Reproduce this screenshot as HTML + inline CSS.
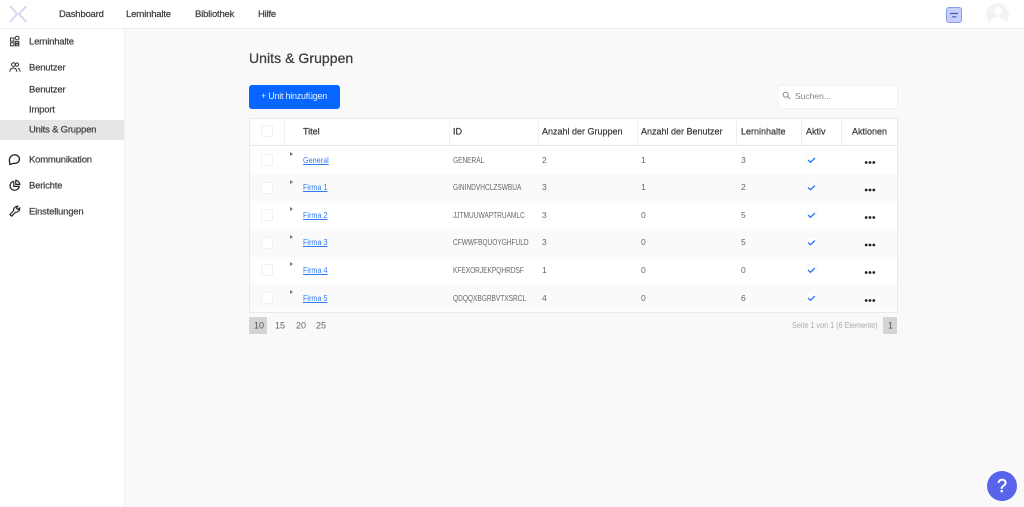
<!DOCTYPE html>
<html lang="de"><head><meta charset="utf-8"><title>Units &amp; Gruppen</title>
<style>
html,body{margin:0;padding:0;background:#f9f9f9}
#w{width:1024px;height:507px;position:relative;overflow:hidden;background:#f9f9f9;font-family:"Liberation Sans",sans-serif;color:#555;font-size:9px;filter:blur(.3px)}
.a,.t{position:absolute;white-space:nowrap}
.t{line-height:14px;height:14px;transform:translateY(-7px)}
.nav{font-size:9.5px;color:#3c3c3c;letter-spacing:-.2px;-webkit-text-stroke:.2px #3c3c3c}
.t.side{font-size:9.5px;color:#3c3c3c;letter-spacing:-.2px;left:29px;-webkit-text-stroke:.2px #3c3c3c;transform:translateY(-6.4px)}
.t.h{font-size:9px;color:#3c3c3c;-webkit-text-stroke:.25px #3c3c3c;transform:translateY(-7.6px)}
.t.p{font-size:9px;transform:translateY(-7.6px)}
.c{font-size:8.5px;color:#666}
.t.id{transform:translateY(-7px) scaleX(.77);transform-origin:left center;left:453px}
.t.l{font-size:8.5px;color:#2f7bf0;text-decoration:underline;left:303px;transform:translateY(-7px) scaleX(.85);transform-origin:left center}
.cb{position:absolute;left:261px;width:10px;height:10px;background:#fff;border:1px solid #f1f1f1;border-radius:2px}
.vl{position:absolute;top:118px;height:28px;width:1px;background:#efefef}
.tri{position:absolute;left:290px;width:0;height:0;border-left:3px solid #777;border-top:2px solid transparent;border-bottom:2px solid transparent}
svg{position:absolute;overflow:visible}
</style></head><body><div id="w">
<div class="a" style="left:0;top:0;width:1024px;height:28px;background:#fff;border-bottom:1px solid #eee"></div>
<div class="a" style="left:0;top:29px;width:124px;height:478px;background:#fff;border-right:1px solid #eee"></div>
<svg style="left:0;top:0" width="30" height="28" fill="none" stroke="#d9d7ee" stroke-width="2"><path d="M10 6L17 14L10 22M26.5 6L19 14L26.5 22"/></svg>
<span class="t nav" style="left:59px;top:14.5px">Dashboard</span>
<span class="t nav" style="left:126px;top:14.5px">Lerninhalte</span>
<span class="t nav" style="left:195px;top:14.5px">Bibliothek</span>
<span class="t nav" style="left:258px;top:14.5px">Hilfe</span>
<div class="a" style="left:946px;top:7px;width:14px;height:14px;background:#c6cffb;border:1px solid #8c9bee;border-radius:3px"></div>
<svg style="left:946px;top:7px" width="16" height="16" fill="none" stroke="#4a5bc0" stroke-width="1.2"><path d="M4 6.5H12M6 9.8H10.5"/></svg>
<div class="a" style="left:986px;top:3px;width:23px;height:23px;border-radius:50%;background:#f3f3f3;overflow:hidden"><div class="a" style="left:7.5px;top:4px;width:8px;height:8px;border-radius:50%;background:#fff"></div><div class="a" style="left:3.5px;top:14px;width:16px;height:12px;border-radius:50%;background:#fff"></div></div>

<svg style="left:10px;top:35px" width="11" height="12" viewBox="0 0 11 12" fill="none" stroke="#333" stroke-width="1"><rect x=".5" y="3" width="3.4" height="3.2"/><rect x=".5" y="7.8" width="3.4" height="3"/><rect x="5.4" y="6.4" width="3.4" height="1.8"/><rect x="5.4" y="9" width="3.4" height="1.8"/><rect x="5.4" y="1.2" width="3.6" height="3.6" rx="1.6"/></svg>
<svg style="left:9px;top:62px" width="12" height="11" viewBox="0 0 12 11" fill="none" stroke="#333" stroke-width="1"><circle cx="4.4" cy="2.6" r="1.8"/><circle cx="8" cy="2.6" r="1.6"/><path d="M.8 9.8C1 6.8 2.6 6 4.4 6S7.6 6.8 8 9.8M8.8 6C10 6.3 10.8 7.4 11.2 9.6"/></svg>
<svg style="left:8px;top:153px" width="13" height="13" viewBox="0 0 13 13" fill="none" stroke="#222" stroke-width="1.3"><path d="M1.8 11.4C2 9.6 1.2 8.6 1.4 6.6C1.8 3.6 4.4 1.6 7 1.8C9.8 2 11.8 4 11.4 6.6C11 9.2 8.6 10.6 6 10.4C4.4 10.3 3.6 11.2 1.8 11.4Z"/></svg>
<svg style="left:8px;top:179px" width="13" height="13" viewBox="0 0 13 13" fill="none" stroke="#222" stroke-width="1.2"><path d="M5.6 2.2A4.6 4.6 0 1 0 11.2 7.4H5.8V2.2"/><path d="M7.8 1.2C9.8 1.6 11.4 3.2 11.8 5.4H7.8Z"/></svg>
<svg style="left:9px;top:205px" width="12" height="12" viewBox="0 0 12 12" fill="none" stroke="#222" stroke-width="1.2"><path d="M1 9.6L4.6 5.6C4.4 3 6.2 1 8.8 1.2L7.4 3.1L8.7 4.5L10.7 3C10.9 5.5 9 7.4 6.6 7.2L2.7 11.2Z"/></svg>

<span class="t side" style="top:42px">Lerninhalte</span>
<span class="t side" style="top:67.5px">Benutzer</span>
<span class="t side" style="top:90px">Benutzer</span>
<span class="t side" style="top:110px">Import</span>
<div class="a" style="left:0;top:120px;width:124px;height:20px;background:#e6e6e6"></div>
<span class="t side" style="top:130px">Units &amp; Gruppen</span>
<span class="t side" style="top:160px">Kommunikation</span>
<span class="t side" style="top:186px">Berichte</span>
<span class="t side" style="top:211.5px">Einstellungen</span>

<span class="t" style="left:249px;top:58px;font-size:14px;color:#3c3c3c;letter-spacing:.05px;-webkit-text-stroke:.25px #3c3c3c;height:18px;line-height:18px;transform:translateY(-9px)">Units &amp; Gruppen</span>
<div class="a" style="left:249px;top:85px;width:91px;height:24px;background:#0766ff;border-radius:3px"></div>
<span class="t" style="left:261px;top:96px;font-size:9px;letter-spacing:-.25px;color:#e8f0ff">+ Unit hinzufügen</span>
<div class="a" style="left:778px;top:85px;width:118px;height:22px;background:#fff;border:1px solid #f2f2f2;border-radius:2px"></div>
<svg style="left:782px;top:91px" width="9" height="9" fill="none" stroke="#888" stroke-width="1"><circle cx="3.7" cy="3.7" r="2.5"/><path d="M5.6 5.6L8 8"/></svg>
<span class="t" style="left:795px;top:96px;font-size:8.5px;color:#888">Suchen...</span>

<div class="a" style="left:249px;top:118px;width:647px;height:193px;background:#fff;border:1px solid #eaeaea"></div>
<div class="a" style="left:250px;top:145px;width:647px;height:1px;background:#e6e6e6"></div>
<div class="a" style="left:250px;top:174px;width:647px;height:27px;background:#fafafa"></div>
<div class="a" style="left:250px;top:229px;width:647px;height:27.5px;background:#fafafa"></div>
<div class="a" style="left:250px;top:284px;width:647px;height:27px;background:#fafafa"></div>
<div class="vl" style="left:284px"></div><div class="vl" style="left:449px"></div><div class="vl" style="left:538px"></div><div class="vl" style="left:637px"></div><div class="vl" style="left:736px"></div><div class="vl" style="left:801px"></div><div class="vl" style="left:841px"></div>

<div class="cb" style="top:125px"></div>
<span class="t h" style="left:303px;top:131.5px">Titel</span>
<span class="t h" style="left:453px;top:131.5px">ID</span>
<span class="t h" style="left:542px;top:131.5px">Anzahl der Gruppen</span>
<span class="t h" style="left:641px;top:131.5px">Anzahl der Benutzer</span>
<span class="t h" style="left:741px;top:131.5px">Lerninhalte</span>
<span class="t h" style="left:806px;top:131.5px">Aktiv</span>
<span class="t h" style="left:852px;top:131.5px">Aktionen</span>

<div class="cb" style="top:154px"></div><div class="tri" style="top:152px"></div>
<span class="t l" style="top:159.6px">General</span><span class="t c id" style="top:159.6px">GENERAL</span><span class="t c" style="left:542px;top:159.6px">2</span><span class="t c" style="left:641px;top:159.6px">1</span><span class="t c" style="left:741px;top:159.6px">3</span>

<div class="cb" style="top:182px"></div><div class="tri" style="top:180px"></div>
<span class="t l" style="top:187.2px">Firma 1</span><span class="t c id" style="top:187.2px">GININDVHCLZSWBUA</span><span class="t c" style="left:542px;top:187.2px">3</span><span class="t c" style="left:641px;top:187.2px">1</span><span class="t c" style="left:741px;top:187.2px">2</span>

<div class="cb" style="top:209px"></div><div class="tri" style="top:207px"></div>
<span class="t l" style="top:215px">Firma 2</span><span class="t c id" style="top:215px">JJTMUUWAPTRUAMLC</span><span class="t c" style="left:542px;top:215px">3</span><span class="t c" style="left:641px;top:215px">0</span><span class="t c" style="left:741px;top:215px">5</span>

<div class="cb" style="top:237px"></div><div class="tri" style="top:235px"></div>
<span class="t l" style="top:242.4px">Firma 3</span><span class="t c id" style="top:242.4px">CFWWFBQUOYGHFULD</span><span class="t c" style="left:542px;top:242.4px">3</span><span class="t c" style="left:641px;top:242.4px">0</span><span class="t c" style="left:741px;top:242.4px">5</span>

<div class="cb" style="top:264px"></div><div class="tri" style="top:262px"></div>
<span class="t l" style="top:270px">Firma 4</span><span class="t c id" style="top:270px">KFEXORJEKPQHRDSF</span><span class="t c" style="left:542px;top:270px">1</span><span class="t c" style="left:641px;top:270px">0</span><span class="t c" style="left:741px;top:270px">0</span>

<div class="cb" style="top:292px"></div><div class="tri" style="top:290px"></div>
<span class="t l" style="top:297.6px">Firma 5</span><span class="t c id" style="top:297.6px">QDQQXBGRBVTXSRCL</span><span class="t c" style="left:542px;top:297.6px">4</span><span class="t c" style="left:641px;top:297.6px">0</span><span class="t c" style="left:741px;top:297.6px">6</span>

<svg style="left:0;top:0" width="1024" height="507">
<g fill="#fff" stroke="#f4f4f4" stroke-width=".5"><rect x="806" y="155" width="11" height="10"/><rect x="806" y="182.5" width="11" height="10"/><rect x="806" y="210" width="11" height="10"/><rect x="806" y="237.5" width="11" height="10"/><rect x="806" y="265" width="11" height="10"/><rect x="806" y="293" width="11" height="10"/></g>
<g fill="none" stroke="#2f7bf0" stroke-width="1.4"><path d="M808 160L810.5 162.3L815 158"/><path d="M808 187.5L810.5 189.8L815 185.5"/><path d="M808 215L810.5 217.3L815 213"/><path d="M808 242.5L810.5 244.8L815 240.5"/><path d="M808 270L810.5 272.3L815 268"/><path d="M808 298L810.5 300.3L815 296"/></g>
<g fill="#222"><circle cx="866.2" cy="162.5" r="1.4"/><circle cx="870" cy="162.5" r="1.4"/><circle cx="873.8" cy="162.5" r="1.4"/><circle cx="866.2" cy="190" r="1.4"/><circle cx="870" cy="190" r="1.4"/><circle cx="873.8" cy="190" r="1.4"/><circle cx="866.2" cy="217.5" r="1.4"/><circle cx="870" cy="217.5" r="1.4"/><circle cx="873.8" cy="217.5" r="1.4"/><circle cx="866.2" cy="245" r="1.4"/><circle cx="870" cy="245" r="1.4"/><circle cx="873.8" cy="245" r="1.4"/><circle cx="866.2" cy="272.5" r="1.4"/><circle cx="870" cy="272.5" r="1.4"/><circle cx="873.8" cy="272.5" r="1.4"/><circle cx="866.2" cy="300.5" r="1.4"/><circle cx="870" cy="300.5" r="1.4"/><circle cx="873.8" cy="300.5" r="1.4"/></g>
</svg>

<div class="a" style="left:249px;top:317px;width:18px;height:17px;background:#d4d4d4;border-radius:1px"></div>
<span class="t p" style="left:254px;top:325.5px;color:#555">10</span>
<span class="t p" style="left:275px;top:325.5px;color:#666">15</span>
<span class="t p" style="left:296px;top:325.5px;color:#666">20</span>
<span class="t p" style="left:316px;top:325.5px;color:#666">25</span>
<span class="t" style="left:792px;top:325px;font-size:8.5px;color:#aaa;transform:translateY(-7px) scaleX(.85);transform-origin:left center">Seite 1 von 1 (6 Elemente)</span>
<div class="a" style="left:883px;top:317px;width:14px;height:17px;background:#d4d4d4;border-radius:1px"></div>
<span class="t p" style="left:888px;top:325.5px;color:#555">1</span>

<div class="a" style="left:987px;top:471px;width:30px;height:30px;border-radius:50%;background:#5865ea"></div>
<span class="t" style="left:987px;width:30px;text-align:center;top:486px;font-size:18px;color:#fff;-webkit-text-stroke:.4px #fff;height:24px;line-height:24px;transform:translateY(-12px)">?</span>
</div></body></html>
